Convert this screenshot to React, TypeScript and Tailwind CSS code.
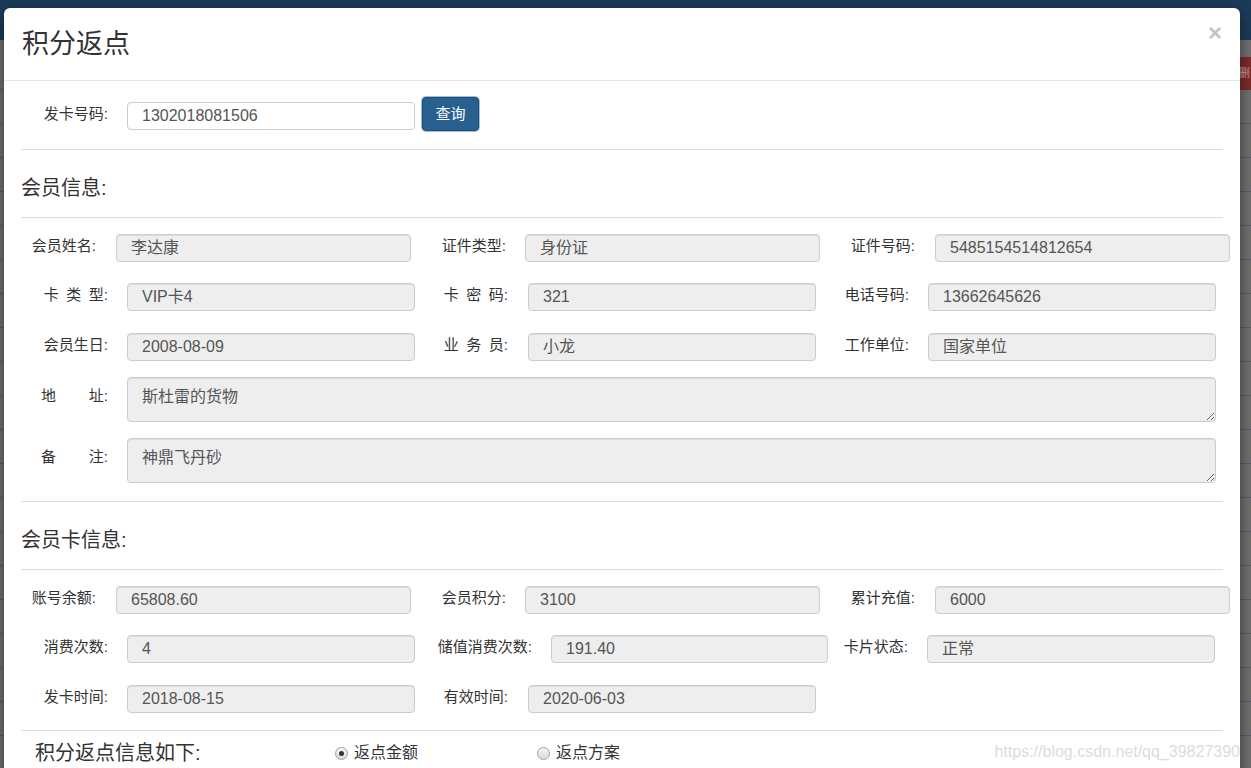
import React from 'react';

const FONT = '"Liberation Sans", "Noto Sans CJK SC", Arial, sans-serif';

interface FieldProps {
    label: React.ReactNode;
    value: string;
    labelCls: string;
    inputCls: string;
}

function Field({ label, value, labelCls, inputCls }: FieldProps) {
    return (
        <>
            <div className={`${labelCls} shrink-0 text-right text-[15px] text-[#333] whitespace-nowrap -mt-[3px]`}>{label}</div>
            <div className={`${inputCls} shrink-0 h-[28px] rounded-[4px] border border-[#ccc] bg-[#eee] pl-[14px] flex items-center text-[16px] text-[#555] shadow-[inset_0_1px_1px_rgba(0,0,0,0.075)]`}>
                {value}
            </div>
        </>
    );
}

function Spread({ a, b }: { a: string; b: string }) {
    return (
        <span className="inline-flex w-[67px] justify-between">
            <span>{a}</span>
            <span>{b}</span>
        </span>
    );
}

function Area({ label, value, cls }: { label: React.ReactNode; value: string; cls: string }) {
    return (
        <div className={`${cls} flex items-start`}>
            <div className="w-[87px] shrink-0 text-right text-[15px] text-[#333] pt-[8px]">{label}</div>
            <textarea
                readOnly
                value={value}
                className="ml-[19px] w-[1089px] h-[45px] shrink-0 rounded-[4px] border border-[#ccc] bg-[#eee] pl-[14px] pt-[7px] text-[16px] text-[#555] outline-none shadow-[inset_0_1px_1px_rgba(0,0,0,0.075)]"
                style={{ fontFamily: FONT }}
            />
        </div>
    );
}

function Radio({ checked, label, cls }: { checked?: boolean; label: string; cls: string }) {
    return (
        <div className={`${cls} flex items-center`}>
            <span className="w-[13px] h-[13px] rounded-full border border-[#a0a0a0] bg-gradient-to-b from-[#f4f4f4] to-[#dcdcdc] flex items-center justify-center">
                {checked && <span className="w-[5px] h-[5px] rounded-full bg-[#333]" />}
            </span>
            <span className="ml-[6px] text-[16px] text-[#333]">{label}</span>
        </div>
    );
}

export default function App() {
    const lines = Array.from({ length: 22 });
    return (
        <div className="relative w-[1251px] h-[768px] overflow-hidden bg-[#707070]" style={{ fontFamily: FONT }}>
            {/* page behind the overlay */}
            <div className="h-[40px] bg-[#1c3b59]" />
            <div className="h-[50px] border-b border-[#4d6079]" />
            <div className="flex flex-col">
                {lines.map((_, i) => (
                    <div key={i} className="h-[34px] border-b border-[#4d6079]" />
                ))}
            </div>
            <div className="absolute right-0 top-[57px] w-[12px] h-[33px] bg-[#7c2b2b] text-[11px] text-[#c9a0a0] overflow-hidden leading-[33px]">删</div>

            {/* modal */}
            <div className="absolute left-[4px] top-[8px] w-[1236px] h-[780px] rounded-[6px] bg-white shadow-[0_5px_15px_rgba(0,0,0,0.5)]">
                <div className="h-[73px] border-b border-[#e5e5e5] flex items-center justify-between pl-[18px] pr-[18px]">
                    <h4 className="text-[27px] text-[#333] leading-none mt-[1px]">积分返点</h4>
                    <span className="text-[24px] font-bold text-[#c4c4c4] leading-none -mt-[22px]">×</span>
                </div>

                <div className="px-[17px]">
                    <div className="mt-[16px] flex items-start h-[34px]">
                        <div className="mt-[6px] w-[87px] text-right text-[15px] text-[#333]">发卡号码:</div>
                        <div className="mt-[5px] ml-[19px] w-[288px] h-[28px] rounded-[4px] border border-[#ccc] bg-white pl-[14px] flex items-center text-[16px] text-[#555]">1302018081506</div>
                        <button className="ml-[7px] w-[57px] h-[34px] rounded-[4px] border border-[#204d74] bg-[#286090] text-white text-[15px] shadow-[0_0_0_1px_#9bc0e4]">查询</button>
                    </div>

                    <div className="mt-[18px] border-t border-[#ddd]" />
                    <div className="h-[67px] flex items-center pt-[9px] text-[20px] text-[#333]">会员信息:</div>
                    <div className="border-t border-[#ddd]" />

                    <div className="mt-[16px] flex items-center">
                        <Field label="会员姓名:" value="李达康" labelCls="w-[75px]" inputCls="ml-[20px] w-[295px]" />
                        <Field label="证件类型:" value="身份证" labelCls="w-[95px]" inputCls="ml-[19px] w-[295px]" />
                        <Field label="证件号码:" value="5485154514812654" labelCls="w-[95px]" inputCls="ml-[20px] w-[295px]" />
                    </div>
                    <div className="mt-[21px] flex items-center">
                        <Field label="卡&ensp;类&ensp;型:" value="VIP卡4" labelCls="w-[87px]" inputCls="ml-[19px] w-[288px]" />
                        <Field label="卡&ensp;密&ensp;码:" value="321" labelCls="w-[93px]" inputCls="ml-[20px] w-[288px]" />
                        <Field label="电话号码:" value="13662645626" labelCls="w-[93px]" inputCls="ml-[19px] w-[288px]" />
                    </div>
                    <div className="mt-[22px] flex items-center">
                        <Field label="会员生日:" value="2008-08-09" labelCls="w-[87px]" inputCls="ml-[19px] w-[288px]" />
                        <Field label="业&ensp;务&ensp;员:" value="小龙" labelCls="w-[93px]" inputCls="ml-[20px] w-[288px]" />
                        <Field label="工作单位:" value="国家单位" labelCls="w-[93px]" inputCls="ml-[19px] w-[288px]" />
                    </div>
                    <Area cls="mt-[16px]" label={<Spread a="地" b="址:" />} value="斯杜雷的货物" />
                    <Area cls="mt-[16px]" label={<Spread a="备" b="注:" />} value="神鼎飞丹砂" />

                    <div className="mt-[18px] border-t border-[#ddd]" />
                    <div className="h-[67px] flex items-center pt-[9px] text-[20px] text-[#333]">会员卡信息:</div>
                    <div className="border-t border-[#ddd]" />

                    <div className="mt-[16px] flex items-center">
                        <Field label="账号余额:" value="65808.60" labelCls="w-[75px]" inputCls="ml-[20px] w-[295px]" />
                        <Field label="会员积分:" value="3100" labelCls="w-[95px]" inputCls="ml-[19px] w-[295px]" />
                        <Field label="累计充值:" value="6000" labelCls="w-[95px]" inputCls="ml-[20px] w-[295px]" />
                    </div>
                    <div className="mt-[21px] flex items-center">
                        <Field label="消费次数:" value="4" labelCls="w-[87px]" inputCls="ml-[19px] w-[288px]" />
                        <Field label="储值消费次数:" value="191.40" labelCls="w-[117px]" inputCls="ml-[19px] w-[277px]" />
                        <Field label="卡片状态:" value="正常" labelCls="w-[80px]" inputCls="ml-[19px] w-[288px]" />
                    </div>
                    <div className="mt-[22px] flex items-center">
                        <Field label="发卡时间:" value="2018-08-15" labelCls="w-[87px]" inputCls="ml-[19px] w-[288px]" />
                        <Field label="有效时间:" value="2020-06-03" labelCls="w-[93px]" inputCls="ml-[20px] w-[288px]" />
                    </div>

                    <div className="mt-[17px] border-t border-[#ddd]" />
                    <div className="mt-[8px] flex items-center h-[28px]">
                        <div className="ml-[14px] w-[300px] text-[20px] text-[#333] whitespace-nowrap">积分返点信息如下:</div>
                        <Radio checked label="返点金额" cls="ml-0" />
                        <Radio label="返点方案" cls="ml-[119px]" />
                    </div>
                </div>

                <div className="absolute right-0 top-[732px] text-[16px] text-[#dcdcdc] whitespace-nowrap">https://blog.csdn.net/qq_39827390</div>
            </div>
        </div>
    );
}
